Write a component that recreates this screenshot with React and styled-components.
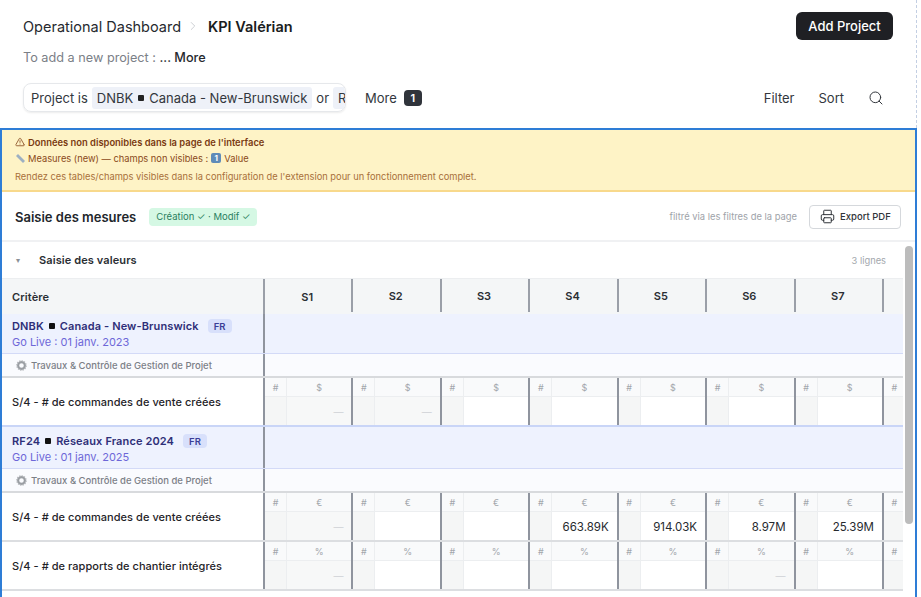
import React from 'react';
import styled, { createGlobalStyle } from 'styled-components';
import { ChevronRight, Printer, Search, TriangleAlert } from 'lucide-react';

const Global = createGlobalStyle`
    html, body { margin: 0; padding: 0; background: #fff; }
    body { font-family: Inter, "Liberation Sans", sans-serif; color: #1f2328; }
    * { box-sizing: border-box; }
`;

const weeks = ['S1', 'S2', 'S3', 'S4', 'S5', 'S6', 'S7', ''];

const blocks = [
    {
        code: 'DNBK', name: 'Canada - New-Brunswick', date: '01 janv. 2023',
        rows: [
            { label: 'S/4 - # de commandes de vente créées', unit: '$', off: [0, 1], values: {} },
        ],
    },
    {
        code: 'RF24', name: 'Réseaux France 2024', date: '01 janv. 2025', divided: true,
        rows: [
            { label: 'S/4 - # de commandes de vente créées', unit: '€', off: [0], values: { 3: '663.89K', 4: '914.03K', 5: '8.97M', 6: '25.39M' } },
            { label: 'S/4 - # de rapports de chantier intégrés', unit: '%', off: [0, 5], values: {} },
        ],
    },
];

export default function App() {
    return (
        <Page>
            <Global />
            <Top>
                <TitleRow>
                    <Crumbs>
                        <Crumb>Operational Dashboard</Crumb>
                        <ChevronRight size={14} color="#c9ccd1" strokeWidth={1.6} />
                        <CrumbStrong>KPI Valérian</CrumbStrong>
                    </Crumbs>
                    <AddButton>Add Project</AddButton>
                </TitleRow>
                <Sub>To add a new project : <b>... More</b></Sub>
                <FilterRow>
                    <FilterBox>
                        <FilterText>Project is</FilterText>
                        <Chip>DNBK <Square $size={6} /> Canada - New-Brunswick</Chip>
                        <FilterText>or</FilterText>
                        <Chip>RF24</Chip>
                    </FilterBox>
                    <MoreLabel>More</MoreLabel>
                    <Badge>1</Badge>
                    <Tools>
                        <ToolLabel>Filter</ToolLabel>
                        <ToolLabel>Sort</ToolLabel>
                        <Search size={16} color="#33373d" strokeWidth={1.5} />
                    </Tools>
                </FilterRow>
            </Top>
            <Frame>
                <Banner>
                    <BannerHead><TriangleAlert size={10} strokeWidth={1.8} />Données non disponibles dans la page de l'interface</BannerHead>
                    <BannerLine>
                        <svg width="11" height="11" viewBox="0 0 11 11"><path d="M1 3 L3 1 L10 8 L8 10 Z" fill="#9db0c2" /></svg>
                        Measures (new) — champs non visibles : <Keycap>1</Keycap> Value
                    </BannerLine>
                    <BannerNote>Rendez ces tables/champs visibles dans la configuration de l'extension pour un fonctionnement complet.</BannerNote>
                </Banner>
                <Head>
                    <HeadTitle>Saisie des mesures</HeadTitle>
                    <Perm>Création ✓ · Modif ✓</Perm>
                    <HeadNote>filtré via les filtres de la page</HeadNote>
                    <ExportButton><Printer size={15} strokeWidth={1.6} />Export PDF</ExportButton>
                </Head>
                <Body>
                    <Scroll>
                        <SectionRow>
                            <Caret>▾</Caret>
                            <SectionTitle>Saisie des valeurs</SectionTitle>
                            <Count>3 lignes</Count>
                        </SectionRow>
                        <HeaderRow>
                            <CritCell>Critère</CritCell>
                            {weeks.map((w, i) => <WeekHead key={i} $first={i === 0}>{w}</WeekHead>)}
                        </HeaderRow>
                        {blocks.map(b => (
                            <React.Fragment key={b.code}>
                                <ProjectRow $divided={b.divided}>
                                    <ProjectCell $divided={b.divided}>
                                        <ProjectName>
                                            {b.code} <Square $size={6} $color="#111" /> {b.name}
                                            <Lang>FR</Lang>
                                        </ProjectName>
                                        <GoLive>Go Live : {b.date}</GoLive>
                                    </ProjectCell>
                                    <Span />
                                </ProjectRow>
                                <GroupRow>
                                    <GroupCell>
                                        <svg width="11" height="11" viewBox="0 0 11 11">
                                            <circle cx="5.5" cy="5.5" r="3.4" fill="none" stroke="#9a9ea3" strokeWidth="2.2" />
                                            <circle cx="5.5" cy="5.5" r="4.7" fill="none" stroke="#b4b7bb" strokeWidth="1.2" strokeDasharray="1.4 1" />
                                        </svg>
                                        Travaux &amp; Contrôle de Gestion de Projet
                                    </GroupCell>
                                    <Span />
                                </GroupRow>
                                {b.rows.map(r => (
                                    <DataRow key={r.label} $beforeProject={b.code === 'DNBK'}>
                                        <LabelCell>{r.label}</LabelCell>
                                        {weeks.map((w, i) => (
                                            <WeekCell key={i}>
                                                <CountUnit>#</CountUnit>
                                                <ValueUnit>{i < 7 ? r.unit : ''}</ValueUnit>
                                                <CountInput />
                                                <ValueInput $off={r.off.includes(i)}>
                                                    {r.off.includes(i) ? <Dash>—</Dash> : r.values[i]}
                                                </ValueInput>
                                            </WeekCell>
                                        ))}
                                    </DataRow>
                                ))}
                            </React.Fragment>
                        ))}
                    </Scroll>
                    <Track><Thumb /></Track>
                </Body>
            </Frame>
        </Page>
    );
}

const Page = styled.div`
    width: 921px;
    height: 597px;
    overflow: hidden;
    background: #fff;
`;
const Top = styled.div`
    width: 917px;
    height: 128px;
    padding: 12px 23px 0 23px;
    border-right: 1px dashed #c3cfe3;
`;
const TitleRow = styled.div`
    display: flex;
    justify-content: space-between;
    align-items: center;
    height: 28px;
`;
const Crumbs = styled.div`
    display: flex;
    align-items: center;
    gap: 5px;
`;
const Crumb = styled.span`
    font-size: 14.5px;
    color: #26292e;
`;
const CrumbStrong = styled.span`
    font-size: 14.5px;
    font-weight: 600;
    color: #1a1c20;
    margin-left: 3px;
`;
const AddButton = styled.button`
    width: 97px;
    height: 28px;
    border: none;
    border-radius: 6px;
    background: #1f2024;
    color: #fff;
    font-family: inherit;
    font-size: 13px;
    font-weight: 500;
    padding: 0;
`;
const Sub = styled.div`
    margin-top: 9px;
    font-size: 12.7px;
    line-height: 18px;
    color: #7b8087;
    b { font-weight: 500; color: #26292e; }
`;
const FilterRow = styled.div`
    display: flex;
    align-items: center;
    margin-top: 16px;
    height: 29px;
`;
const FilterBox = styled.div`
    display: flex;
    align-items: center;
    gap: 4px;
    width: 323px;
    height: 29px;
    padding: 0 0 0 7px;
    border: 1px solid #e6e8eb;
    border-radius: 8px;
    box-shadow: 0 1px 2px rgba(0, 0, 0, 0.08);
    overflow: hidden;
    white-space: nowrap;
`;
const FilterText = styled.span`
    font-size: 13px;
    color: #33373d;
`;
const Chip = styled.span`
    display: inline-flex;
    align-items: center;
    gap: 5px;
    flex-shrink: 0;
    height: 22px;
    padding: 0 5px;
    border-radius: 3px;
    background: #eef1f8;
    font-size: 13px;
    color: #33373d;
`;
const Square = styled.span`
    display: inline-block;
    width: ${p => p.$size}px;
    height: ${p => p.$size}px;
    border-radius: 1px;
    background: ${p => p.$color || '#222'};
    vertical-align: 1px;
`;
const MoreLabel = styled.span`
    margin-left: 19px;
    font-size: 13px;
    color: #33373d;
`;
const Badge = styled.span`
    display: inline-flex;
    justify-content: center;
    align-items: center;
    width: 18px;
    height: 16px;
    margin-left: 7px;
    border-radius: 4px;
    background: #30343b;
    color: #fff;
    font-size: 11px;
    font-weight: 600;
`;
const Tools = styled.div`
    display: flex;
    align-items: center;
    gap: 24px;
    margin-left: auto;
    margin-right: 9px;
`;
const ToolLabel = styled.span`
    font-size: 13px;
    color: #33373d;
`;
const Frame = styled.div`
    width: 917px;
    height: 469px;
    border: solid #2e7dd6;
    border-width: 2px 2px 0 2px;
`;
const Banner = styled.div`
    height: 62px;
    padding: 4px 13px 0 13px;
    background: #fef3c6;
    border-bottom: 2px solid #f8d98c;
    font-size: 9.3px;
`;
const BannerHead = styled.div`
    display: flex;
    align-items: center;
    gap: 3px;
    height: 16px;
    font-size: 9.4px;
    font-weight: 600;
    color: #7a3a12;
`;
const BannerLine = styled.div`
    display: flex;
    align-items: center;
    gap: 2px;
    height: 16px;
    color: #8a4a1a;
`;
const Keycap = styled.span`
    display: inline-flex;
    justify-content: center;
    align-items: center;
    width: 10px;
    height: 10px;
    margin: 0 1px;
    border-radius: 2px;
    background: #5f8bb8;
    color: #fff;
    font-size: 8px;
    font-weight: 700;
`;
const BannerNote = styled.div`
    margin-top: 3px;
    line-height: 16px;
    color: #a8703a;
`;
const Head = styled.div`
    display: flex;
    align-items: center;
    height: 50px;
    padding: 1px 14px 0 13px;
    border-bottom: 2px solid #f0f1f3;
`;
const HeadTitle = styled.span`
    font-size: 13px;
    font-weight: 600;
    color: #22262b;
`;
const Perm = styled.span`
    display: inline-flex;
    align-items: center;
    height: 18px;
    margin-left: 13px;
    padding: 0 7px;
    border-radius: 4px;
    background: #d5f8e4;
    color: #2a7f60;
    font-size: 9.5px;
`;
const HeadNote = styled.span`
    margin-left: auto;
    font-size: 9.4px;
    color: #9ea3a9;
`;
const ExportButton = styled.button`
    display: inline-flex;
    align-items: center;
    gap: 5px;
    width: 92px;
    height: 24px;
    margin-left: 12px;
    padding: 0 0 0 10px;
    border: 1px solid #d5d8dc;
    border-radius: 4px;
    background: #fff;
    color: #30343a;
    font-family: inherit;
    font-size: 9.5px;
    font-weight: 500;
`;
const Body = styled.div`
    display: flex;
    height: 355px;
`;
const Scroll = styled.div`
    width: 901px;
    overflow: hidden;
`;
const SectionRow = styled.div`
    display: flex;
    align-items: center;
    height: 36px;
    padding: 0 17px 0 14px;
`;
const Caret = styled.span`
    width: 23px;
    font-size: 8px;
    color: #8b9096;
`;
const SectionTitle = styled.span`
    font-size: 11px;
    font-weight: 600;
    letter-spacing: 0.1px;
    color: #2a2e33;
`;
const Count = styled.span`
    margin-left: auto;
    font-size: 9.3px;
    color: #a3a7ad;
`;
const Grid = styled.div`
    display: grid;
    grid-template-columns: 261px repeat(8, 88.43px);
`;
const HeaderRow = styled(Grid)`
    height: 36px;
    background: #f4f6f7;
    border-top: 1px solid #eceef0;
`;
const CritCell = styled.div`
    display: flex;
    align-items: center;
    padding: 1px 0 0 10px;
    font-size: 11px;
    font-weight: 600;
    letter-spacing: 0.1px;
    color: #2a2e33;
`;
const WeekHead = styled.div`
    display: flex;
    justify-content: center;
    align-items: center;
    margin-bottom: ${p => (p.$first ? 0 : 2)}px;
    padding: ${p => (p.$first ? 1 : 0)}px 2px 0 0;
    border-left: 2px solid #9a9fa8;
    font-size: 11px;
    font-weight: 600;
    color: #2a2e33;
`;
const ProjectRow = styled(Grid)`
    height: ${p => (p.$divided ? 42 : 40)}px;
    background: #eef2fe;
    border-bottom: 1px solid #d3daf7;
`;
const ProjectCell = styled.div`
    padding: ${p => (p.$divided ? 6 : 4)}px 0 0 10px;
`;
const ProjectName = styled.div`
    display: flex;
    align-items: center;
    gap: 5px;
    height: 16px;
    font-size: 11px;
    font-weight: 600;
    letter-spacing: 0.12px;
    color: #2e2f78;
`;
const Lang = styled.span`
    display: inline-flex;
    justify-content: center;
    align-items: center;
    width: 24px;
    height: 14px;
    margin-left: 4px;
    border-radius: 4px;
    background: #d8e0fb;
    color: #3b3d96;
    font-size: 9.5px;
    font-weight: 600;
`;
const GoLive = styled.div`
    font-size: 11px;
    line-height: 16px;
    color: #6d67d8;
`;
const Span = styled.div`
    grid-column: 2 / -1;
    border-left: 2px solid #8f949e;
`;
const GroupRow = styled(Grid)`
    height: 24px;
    background: #fafbfe;
    border-bottom: 2px solid #d8dadd;
`;
const GroupCell = styled.div`
    display: flex;
    align-items: center;
    gap: 4px;
    padding-left: 14px;
    font-size: 9.5px;
    font-weight: 500;
    color: #7c8087;
`;
const DataRow = styled(Grid)`
    height: 49px;
    background: #fff;
    border-bottom: 2px solid ${p => (p.$beforeProject ? '#c9d5f7' : '#dcdee1')};
`;
const LabelCell = styled.div`
    display: flex;
    align-items: center;
    padding: 1px 0 0 10px;
    font-size: 11px;
    font-weight: 500;
    letter-spacing: 0.05px;
    color: #1f2328;
`;
const WeekCell = styled.div`
    display: grid;
    grid-template-columns: 22px 1fr;
    grid-template-rows: 19px 1fr;
    border-left: 2px solid #8f949e;
`;
const CountUnit = styled.div`
    display: flex;
    justify-content: center;
    align-items: center;
    background: #f9fafb;
    border-bottom: 1px solid #eceef0;
    border-right: 1px solid #eceef0;
    font-size: 9px;
    color: #a2a6ab;
`;
const ValueUnit = styled(CountUnit)`
    border-right: none;
`;
const CountInput = styled.div`
    background: #f5f6f6;
    border-right: 1px solid #eceef0;
`;
const ValueInput = styled.div`
    display: flex;
    justify-content: flex-end;
    align-items: center;
    padding: 1px 8px 0 0;
    background: ${p => (p.$off ? '#f7f8f8' : '#fff')};
    font-size: 11.5px;
    color: #26292e;
`;
const Dash = styled.span`
    color: #cfd2d6;
    font-size: 10px;
`;
const Track = styled.div`
    flex: 1;
    padding: 4px 1px 0 2px;
`;
const Thumb = styled.div`
    width: 8px;
    height: 278px;
    border-radius: 4px;
    background: #bcbcbc;
`;
